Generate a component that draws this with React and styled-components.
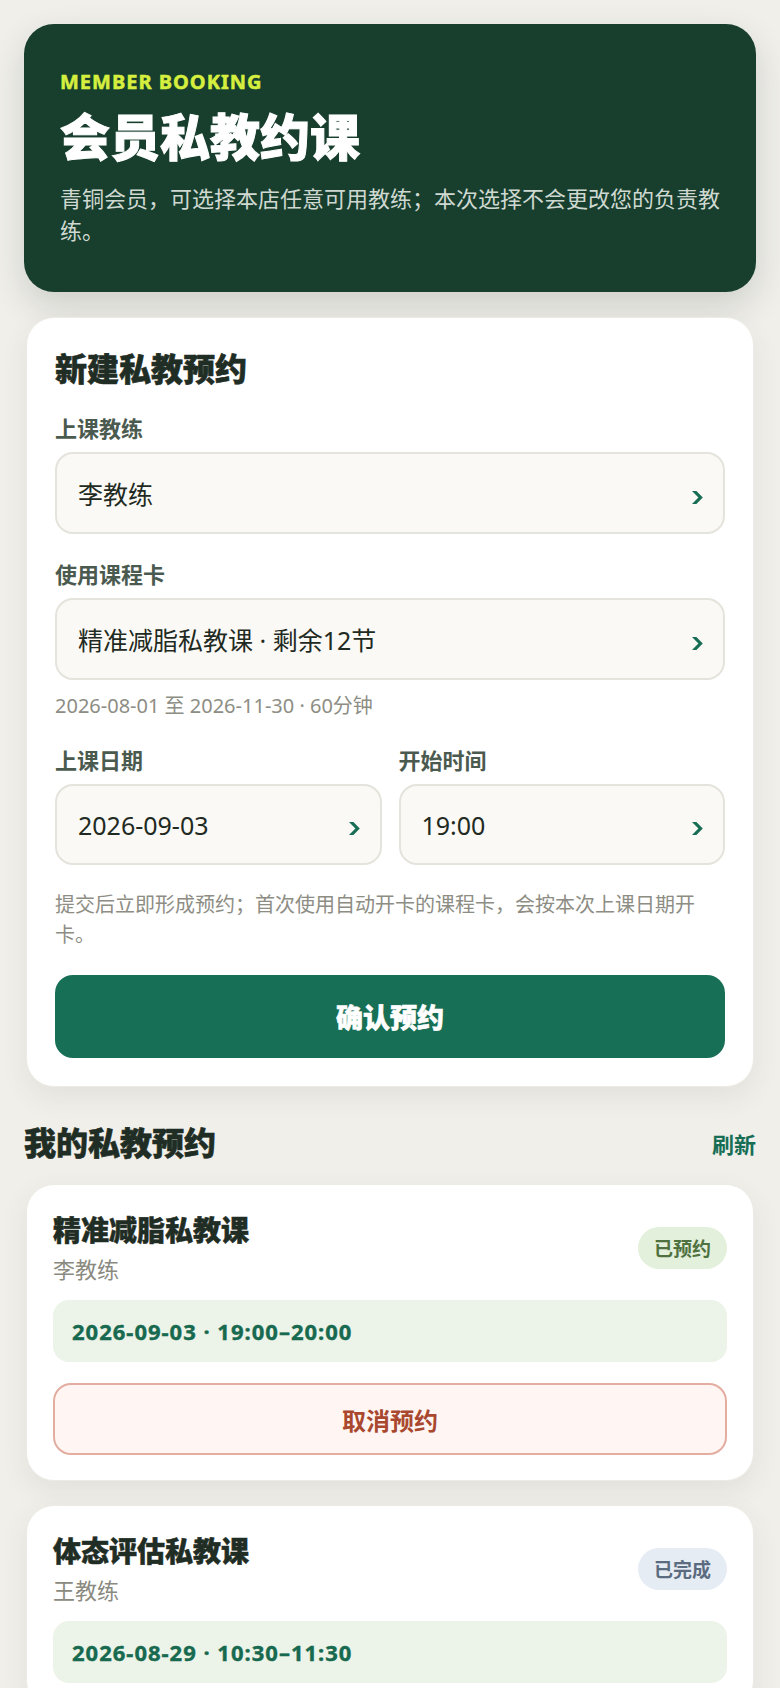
import React from "react";
import styled, { createGlobalStyle } from "styled-components";

const GlobalStyle = createGlobalStyle`
  html, body {
    margin: 0;
    padding: 0;
    background: #f0efea;
  }
  body {
    font-family: "Noto Sans", "Noto Sans CJK SC", sans-serif;
    color: #1f2d24;
    -webkit-font-smoothing: antialiased;
  }
  * {
    box-sizing: border-box;
  }
`;

const Page = styled.div`
  display: flex;
  flex-direction: column;
  padding: 24px 24px 40px;
`;

const Hero = styled.header`
  background: #183f2e;
  border-radius: 30px;
  padding: 46px 36px 46px;
  box-shadow: 0 14px 34px rgba(40, 50, 35, 0.16);
  display: flex;
  flex-direction: column;
`;

const Eyebrow = styled.div`
  font-size: 20px;
  line-height: 24px;
  font-weight: 700;
  letter-spacing: 1px;
  color: #d6ef3e;
  margin-bottom: 13px;
  -webkit-text-stroke: 0.5px #d6ef3e;
`;

const HeroTitle = styled.h1`
  margin: 0 0 15px;
  font-size: 50px;
  line-height: 60px;
  font-weight: 900;
  color: #ffffff;
  -webkit-text-stroke: 1px #ffffff;
`;

const HeroText = styled.p`
  margin: 0;
  font-size: 22px;
  line-height: 32px;
  color: #cfd9d1;
`;

const Card = styled.section`
  background: #ffffff;
  border-radius: 28px;
  margin: ${(p) => p.$top || 25}px 2px 0;
  padding: ${(p) => p.$pad || "28px"};
  box-shadow: 0 10px 28px rgba(60, 60, 40, 0.08);
  border: 1px solid #ecebe5;
  display: flex;
  flex-direction: column;
`;

const CardTitle = styled.h2`
  margin: 0;
  font-size: 32px;
  line-height: 42px;
  font-weight: 900;
  color: #1f2d24;
  -webkit-text-stroke: 0.6px #1f2d24;
`;

const Group = styled.div`
  display: flex;
  flex-direction: column;
  margin-top: ${(p) => p.$top || 25}px;
  min-width: 0;
`;

const Label = styled.label`
  font-size: 22px;
  line-height: 29px;
  font-weight: 700;
  color: #4b5a4f;
  margin-bottom: 9px;
`;

const Field = styled.div`
  height: ${(p) => p.$h || 82}px;
  border: 2px solid #e4e4dc;
  background: #faf9f5;
  border-radius: 18px;
  padding: 0 20px 0 21px;
  display: flex;
  align-items: center;
  justify-content: space-between;
  font-size: 25px;
  color: #1f2a22;
`;

const Chevron = styled.svg`
  width: 11px;
  height: 13px;
  margin-top: 8px;
  flex-shrink: 0;
`;

const Hint = styled.div`
  margin-top: 12px;
  font-size: 20px;
  line-height: 28px;
  color: #8d8d84;
`;

const Row = styled.div`
  display: grid;
  grid-template-columns: 1fr 1fr;
  column-gap: 17px;
`;

const Note = styled.p`
  margin: 25px 0 0;
  font-size: 20px;
  line-height: 30px;
  color: #8d8d84;
`;

const PrimaryButton = styled.button`
  margin-top: 25px;
  height: 83px;
  border: none;
  border-radius: 18px;
  background: #176f56;
  color: #ffffff;
  font-family: inherit;
  font-size: 27px;
  font-weight: 900;
  -webkit-text-stroke: 0.6px #ffffff;
`;

const SectionHead = styled.div`
  display: flex;
  align-items: center;
  justify-content: space-between;
  margin-top: 35px;
`;

const SectionTitle = styled.h2`
  margin: 0;
  font-size: 32px;
  line-height: 42px;
  font-weight: 900;
  color: #1f2d24;
  -webkit-text-stroke: 0.6px #1f2d24;
`;

const Refresh = styled.button`
  border: none;
  background: none;
  padding: 0;
  font-family: inherit;
  font-size: 22px;
  font-weight: 700;
  color: #176e55;
`;

const BookingTop = styled.div`
  display: flex;
  align-items: center;
  justify-content: space-between;
`;

const BookingInfo = styled.div`
  display: flex;
  flex-direction: column;
`;

const BookingTitle = styled.h3`
  margin: 0;
  font-size: 28px;
  line-height: 36px;
  font-weight: 900;
  color: #1f2d24;
  -webkit-text-stroke: 0.5px #1f2d24;
`;

const Coach = styled.div`
  margin-top: 7px;
  font-size: 22px;
  line-height: 28px;
  color: #8a8a80;
`;

const badgeColors = {
  booked: { bg: "#e3f0dc", fg: "#4f7140" },
  done: { bg: "#e6ecf4", fg: "#5b6b80" },
};

const Badge = styled.span`
  height: 42px;
  padding: 0 16px;
  border-radius: 21px;
  display: inline-flex;
  align-items: center;
  font-size: 19px;
  font-weight: 700;
  background: ${(p) => badgeColors[p.$status].bg};
  color: ${(p) => badgeColors[p.$status].fg};
`;

const TimeBox = styled.div`
  margin-top: 17px;
  height: 62px;
  border-radius: 16px;
  background: #ecf3e8;
  padding: 0 19px;
  display: flex;
  align-items: center;
  font-family: "Noto Sans", sans-serif;
  font-size: 22px;
  font-weight: 700;
  letter-spacing: 1px;
  color: #17694f;
  -webkit-text-stroke: 0.4px #17694f;
`;

const CancelButton = styled.button`
  margin-top: 21px;
  height: 72px;
  border: 2px solid #e3ada1;
  border-radius: 18px;
  background: #fff6f3;
  color: #a9482f;
  font-family: inherit;
  font-size: 24px;
  font-weight: 700;
`;

function Arrow() {
  return (
    <Chevron viewBox="0 0 11 13">
      <polygon points="0,0 4.4,0 10.8,6.5 4.4,13 0,13 6.4,6.5" fill="#176e55" />
    </Chevron>
  );
}

function SelectField({ label, value, top, h }) {
  return (
    <Group $top={top}>
      <Label>{label}</Label>
      <Field $h={h}>
        <span>{value}</span>
        <Arrow />
      </Field>
    </Group>
  );
}

const bookings = [
  {
    id: 1,
    title: "精准减脂私教课",
    coach: "李教练",
    status: "booked",
    statusText: "已预约",
    time: "2026-09-03 · 19:00–20:00",
    cancel: true,
  },
  {
    id: 2,
    title: "体态评估私教课",
    coach: "王教练",
    status: "done",
    statusText: "已完成",
    time: "2026-08-29 · 10:30–11:30",
    cancel: false,
  },
];

export default function App() {
  return (
    <Page>
      <GlobalStyle />
      <Hero>
        <Eyebrow>MEMBER BOOKING</Eyebrow>
        <HeroTitle>会员私教约课</HeroTitle>
        <HeroText>青铜会员，可选择本店任意可用教练；本次选择不会更改您的负责教练。</HeroText>
      </Hero>

      <Card $pad="30px 28px 28px">
        <CardTitle>新建私教预约</CardTitle>
        <SelectField label="上课教练" value="李教练" top={24} />
        <Group $top={26}>
          <Label>使用课程卡</Label>
          <Field>
            <span>精准减脂私教课 · 剩余12节</span>
            <Arrow />
          </Field>
          <Hint>2026-08-01 至 2026-11-30 · 60分钟</Hint>
        </Group>
        <Row>
          <SelectField label="上课日期" value="2026-09-03" top={26} h={81} />
          <SelectField label="开始时间" value="19:00" top={26} h={81} />
        </Row>
        <Note>提交后立即形成预约；首次使用自动开卡的课程卡，会按本次上课日期开卡。</Note>
        <PrimaryButton>确认预约</PrimaryButton>
      </Card>

      <SectionHead>
        <SectionTitle>我的私教预约</SectionTitle>
        <Refresh>刷新</Refresh>
      </SectionHead>

      {bookings.map((b, i) => (
        <Card key={b.id} $pad="27px 26px 25px" $top={i === 0 ? 20 : 24}>
          <BookingTop>
            <BookingInfo>
              <BookingTitle>{b.title}</BookingTitle>
              <Coach>{b.coach}</Coach>
            </BookingInfo>
            <Badge $status={b.status}>{b.statusText}</Badge>
          </BookingTop>
          <TimeBox>{b.time}</TimeBox>
          {b.cancel && <CancelButton>取消预约</CancelButton>}
        </Card>
      ))}
    </Page>
  );
}
